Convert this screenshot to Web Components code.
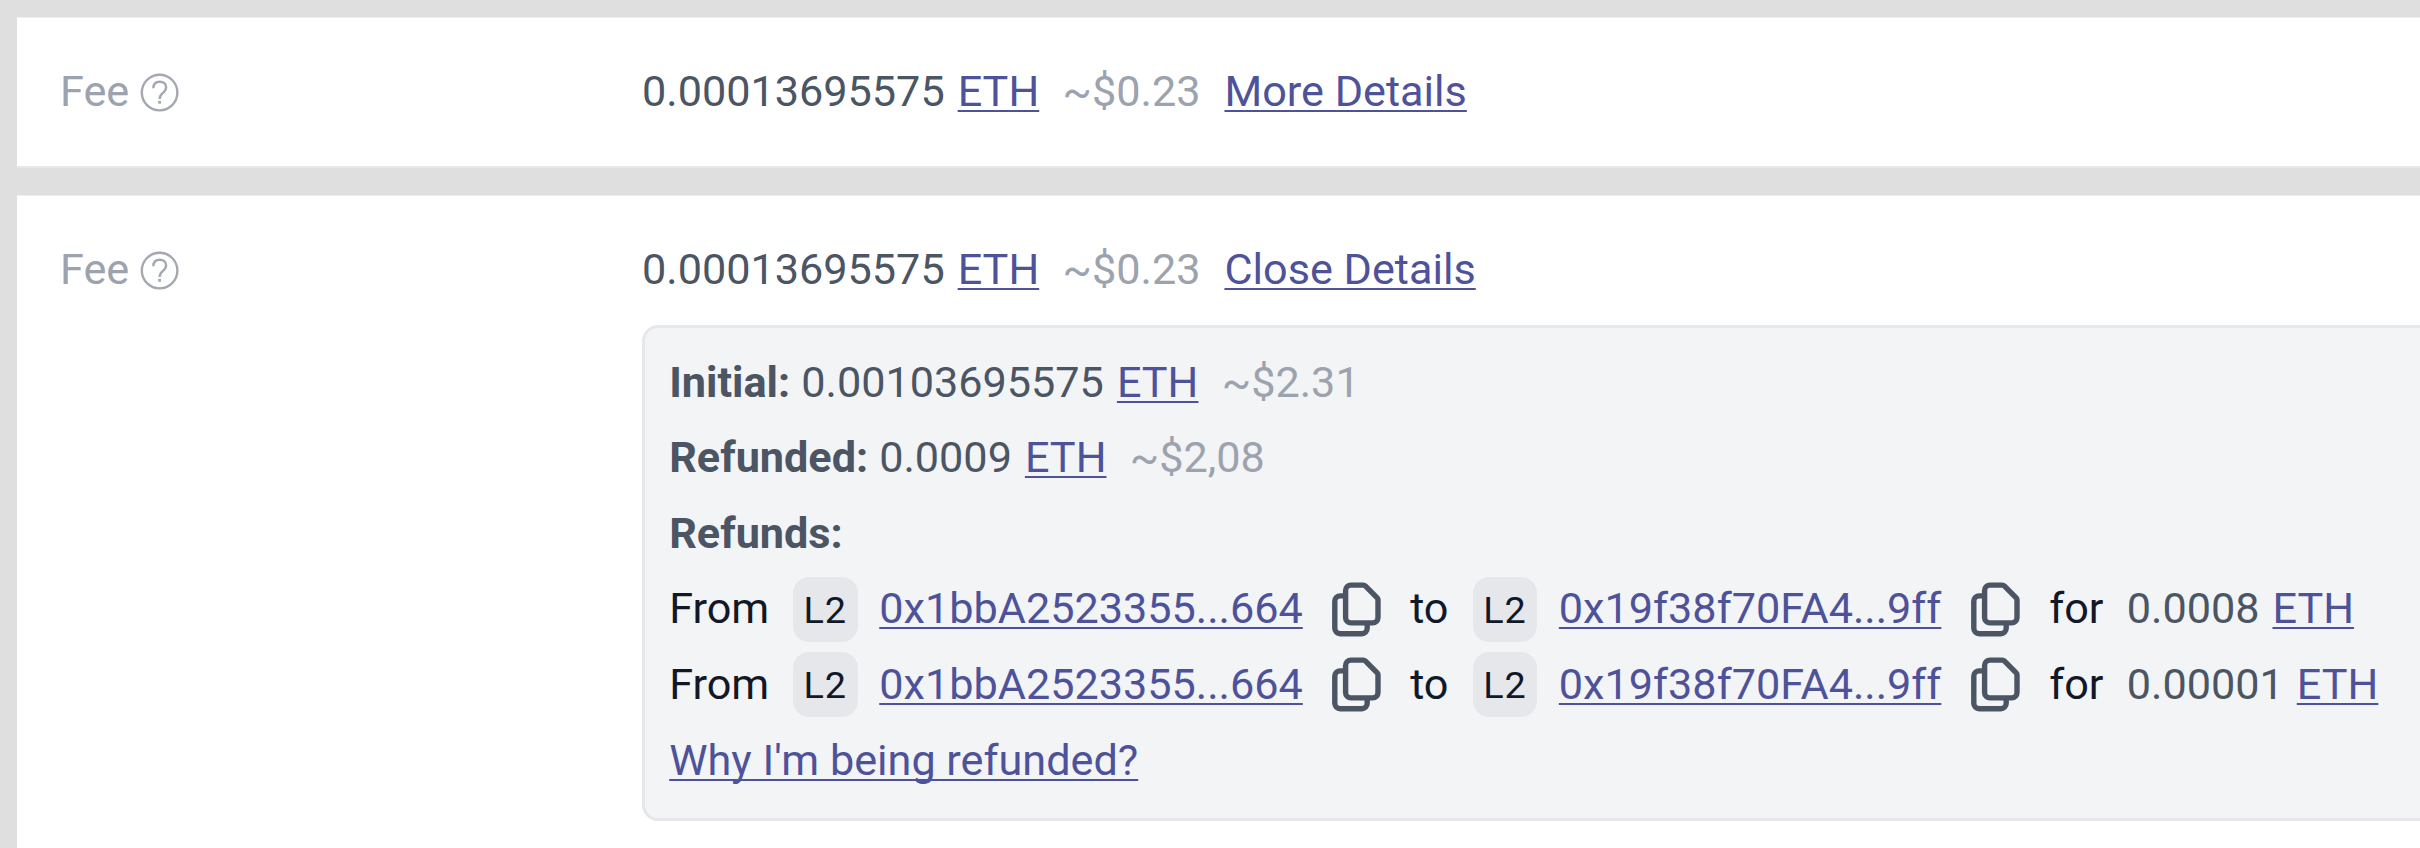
<!DOCTYPE html>
<html lang="en">
<head>
<meta charset="utf-8">
<title>Transaction fee</title>
<style>
  html, body { margin: 0; height: 100%; overflow: hidden; background: #dfdfdf; }
  body { font: 400 43.2px/64.8px Roboto, sans-serif; color: #4b5563; }
</style>
</head>
<body>
<fee-page>
  <fee-panel>
    <fee-label slot="label">Fee</fee-label>
    <fee-amount value="0.00013695575" usd="~$0.23"></fee-amount><text-link class="toggle">More Details</text-link>
  </fee-panel>
  <fee-panel open>
    <fee-label slot="label">Fee</fee-label>
    <fee-amount value="0.00013695575" usd="~$0.23"></fee-amount><text-link class="toggle">Close Details</text-link>
    <fee-details slot="details">
      <fee-row label="Initial:"><fee-amount value="0.00103695575" usd="~$2.31"></fee-amount></fee-row>
      <fee-row label="Refunded:"><fee-amount value="0.0009" usd="~$2,08"></fee-amount></fee-row>
      <fee-row label="Refunds:"></fee-row>
      <refund-transfer from="0x1bbA2523355...664" to="0x19f38f70FA4...9ff" value="0.0008"></refund-transfer>
      <refund-transfer from="0x1bbA2523355...664" to="0x19f38f70FA4...9ff" value="0.00001"></refund-transfer>
      <fee-row><text-link>Why I'm being refunded?</text-link></fee-row>
    </fee-details>
  </fee-panel>
</fee-page>

<script>
const define = (name, render) => customElements.define(name, class extends HTMLElement {
  connectedCallback() {
    if (this.shadowRoot) return;
    this.attachShadow({ mode: 'open' }).innerHTML = render(this);
  }
});

define('fee-page', () => `
  <style>
    :host { display: flex; flex-direction: column; gap: 27px; box-sizing: border-box; width: 2420px; height: 848px; padding: 17px 0 0 17px; overflow: hidden; }
  </style><slot></slot>`);

define('fee-panel', () => `
  <style>
    :host { display: grid; grid-template-columns: 582px max-content; align-content: start; flex: none; box-sizing: border-box; height: 151px; padding: 42px 0 0 43px; background: #fff; border-top: 1px solid #efefef; border-bottom: 2px solid #e5e7eb; }
    :host([open]) { height: 700px; }
    .value { display: flex; white-space: nowrap; }
    .details { grid-column: 2; margin-top: 22.2px; }
    ::slotted(.toggle) { margin-left: 24px; }
  </style>
  <slot name="label"></slot><div class="value"><slot></slot></div><div class="details"><slot name="details"></slot></div>`);

define('fee-label', () => `
  <style>
    :host { display: flex; align-items: center; gap: 8.5px; height: 64.8px; color: #9ca3af; }
    svg { width: 43.2px; height: 43.2px; flex: none; margin-top: 1px; }
  </style>
  <span><slot></slot></span>
  <svg viewBox="0 0 43.2 43.2" fill="none" stroke="#a3a8b1" stroke-width="2.4">
    <circle cx="21.6" cy="21.6" r="17.8"/>
    <path d="M15.3 17.2C15.4 13 17.9 10.7 21.7 10.7C25.5 10.7 28.1 12.9 28.1 16.3C28.1 18.9 26.8 20.4 24.7 22.1C22.4 24 21.6 25 21.6 28"/>
    <path d="M21.6 29.8V32.7" stroke-width="2.8"/>
  </svg>`);

define('text-link', () => `
  <style>
    :host { display: inline-block; }
    a { color: #4e529a; text-decoration: underline; text-decoration-thickness: 2px; text-underline-offset: 4px; text-decoration-skip-ink: none; cursor: pointer; }
  </style><a><slot></slot></a>`);

define('fee-amount', el => `
  <style>
    :host { display: flex; white-space: nowrap; }
    text-link { margin-left: 13px; }
    .usd { margin-left: 23.4px; color: #9ca3af; }
  </style>
  <span>${el.getAttribute('value')}</span><text-link>ETH</text-link>${el.hasAttribute('usd') ? `<span class="usd">${el.getAttribute('usd')}</span>` : ''}`);

define('fee-details', () => `
  <style>
    :host { display: flex; flex-direction: column; box-sizing: border-box; width: 1850px; height: 496px; padding: 16.6px 24.2px; background: #f3f4f6; border: 3px solid #e5e7eb; border-radius: 16.2px; }
  </style><slot></slot>`);

define('fee-row', el => `
  <style>
    :host { display: flex; flex: none; height: 75.6px; line-height: 75.6px; white-space: nowrap; }
    b { font-weight: 700; margin-right: 11px; }
  </style>${el.hasAttribute('label') ? `<b>${el.getAttribute('label')}</b>` : ''}<slot></slot>`);

define('layer-badge', () => `
  <style>
    :host { display: flex; justify-content: center; flex: none; width: 64.8px; height: 64.8px; border-radius: 16.2px; background: #e5e7eb; color: #111827; font-size: 37.8px; line-height: 66.8px; letter-spacing: 0.9px; }
  </style><slot></slot>`);

define('copy-icon', () => `
  <style>
    :host { display: block; flex: none; width: 64.8px; height: 64.8px; }
    svg { display: block; width: 100%; height: 100%; }
  </style>
  <svg viewBox="0 0 24 24" fill="none" stroke="#4b5563" stroke-width="2" stroke-linecap="round" stroke-linejoin="round"><path d="M8 7v8a2 2 0 002 2h6M8 7V5a2 2 0 012-2h4.586a1 1 0 01.707.293l4.414 4.414a1 1 0 01.293.707V15a2 2 0 01-2 2h-2M8 7H6a2 2 0 00-2 2v10a2 2 0 002 2h8a2 2 0 002-2v-2"/></svg>`);

define('refund-transfer', el => `
  <style>
    :host { display: grid; grid-template-columns: 123.7px 86.4px 444.7px 86.2px 62.4px 86.3px 404px 86.4px 77.5px max-content; align-items: center; flex: none; height: 75.6px; line-height: 75.6px; white-space: nowrap; }
    .word { color: #111827; }
  </style>
  <span class="word">From</span><layer-badge>L2</layer-badge><text-link>${el.getAttribute('from')}</text-link><copy-icon></copy-icon>
  <span class="word">to</span><layer-badge>L2</layer-badge><text-link>${el.getAttribute('to')}</text-link><copy-icon></copy-icon>
  <span class="word">for</span><fee-amount value="${el.getAttribute('value')}"></fee-amount>`);
</script>
</body>
</html>
